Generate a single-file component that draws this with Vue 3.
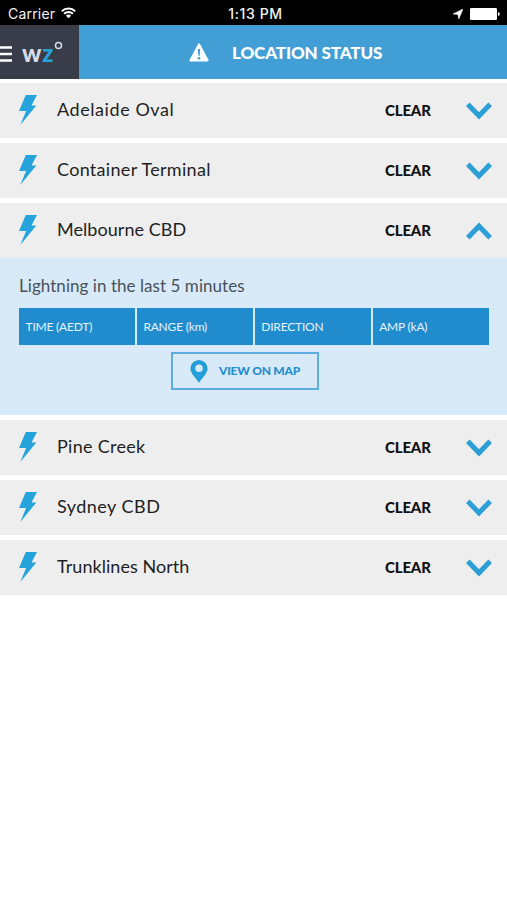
<script setup>
import { ref } from 'vue'

const locations = ref([
  { name: 'Adelaide Oval', spacing: 0.57, open: false },
  { name: 'Container Terminal', spacing: 0.3, open: false },
  { name: 'Melbourne CBD', spacing: 0.05, open: true },
  { name: 'Pine Creek', spacing: 0.3, open: false },
  { name: 'Sydney CBD', spacing: 0.48, open: false },
  { name: 'Trunklines North', spacing: 0.05, open: false }
])
const columns = ['TIME (AEDT)', 'RANGE (km)', 'DIRECTION', 'AMP (kA)']
</script>

<template>
  <div class="screen">
    <div class="status-bar">
      <div class="carrier">
        <span>Carrier</span>
        <svg width="15" height="12" viewBox="0 0 15 12" fill="none" stroke="#fff" stroke-width="1.9">
          <path d="M.8 4.2a9.8 9.8 0 0 1 13.4 0M3.1 6.8a6.3 6.3 0 0 1 8.8 0" />
          <path d="M7.5 11.3L4.9 8.7a3.8 3.8 0 0 1 5.2 0z" fill="#fff" stroke="none" />
        </svg>
      </div>
      <div class="clock">1:13 PM</div>
      <div class="indicators">
        <svg width="10" height="10" viewBox="0 0 10 10"><path d="M0 5L10 0L5.8 10L4.9 5.4z" fill="#fff" stroke="#fff" stroke-width=".5" /></svg>
        <svg width="30" height="12" viewBox="0 0 30 12" fill="#fff"><rect width="27" height="12" rx="1.3" /><path d="M28 4q1.8.5 1.8 2T28 8z" /></svg>
      </div>
    </div>
    <header class="header">
      <div class="brand">
        <svg class="menu" width="12" height="16" viewBox="0 0 12 16"><path d="M0 1.5h12M0 8h12M0 14.5h12" stroke="#fff" stroke-width="2.6" /></svg>
        <span class="logo">w<b>z</b></span>
        <svg class="degree" width="9" height="9" viewBox="0 0 9 9"><circle cx="4.5" cy="4.5" r="3" fill="none" stroke="#d8dce9" stroke-width="1.5" /></svg>
      </div>
      <div class="heading">
        <svg width="20" height="19" viewBox="0 0 20 19">
          <path d="M9 .9q1-1.5 2 0l8.5 16q.6 1.5-1 1.5h-17q-1.6 0-1-1.5z" fill="#fff" />
          <path d="M8.8 6h2.4l-.5 6.7H9.3z" fill="#419fd5" /><circle cx="10" cy="15.2" r="1.3" fill="#419fd5" />
        </svg>
        <h1>LOCATION STATUS</h1>
      </div>
    </header>
    <main class="list">
      <section v-for="item in locations" :key="item.name">
        <div class="row" @click="item.open = !item.open">
          <svg class="bolt" width="18" height="30" viewBox="0 0 18 30"><path d="M6.800 0H18L12.500 10.600H17.300L1.300 30L7.100 15.900H0z" fill="#25a3da" /></svg>
          <span class="name" :style="{ letterSpacing: item.spacing + 'px' }">{{ item.name }}</span>
          <span class="state">CLEAR</span>
          <svg class="chevron" :class="{ up: item.open }" width="26" height="18" viewBox="0 0 26 18"><path d="M1.800 2.200L13 13.800L24.200 2.200" fill="none" stroke="#2b9fd6" stroke-width="5" /></svg>
        </div>
        <div v-if="item.open" class="panel">
          <h2>Lightning in the last 5 minutes</h2>
          <div class="table"><div v-for="column in columns" :key="column">{{ column }}</div></div>
          <button>
            <svg width="18" height="23" viewBox="0 0 18 23"><path fill-rule="evenodd" d="M9 0a8.600 8.600 0 0 1 8.600 8.600C17.600 13.500 12 18 9 23C6 18 .4 13.500.4 8.600A8.600 8.600 0 0 1 9 0zM9 4.500a3.800 3.800 0 1 0 0 7.600a3.800 3.800 0 0 0 0-7.600z" fill="#249ed8" /></svg>
            <span>VIEW ON MAP</span>
          </button>
        </div>
      </section>
    </main>
  </div>
</template>

<style>
body { margin: 0; background: #fff; }
</style>

<style scoped>
.screen { width: 100%; min-height: 900px; background: #fff; font-family: Lato, "Liberation Sans", sans-serif; overflow: hidden; }
.status-bar { height: 25px; background: #000; color: #f2f2f2; display: grid; grid-template-columns: 1fr auto 1fr; align-items: center; box-sizing: border-box; padding: 3px 7px 0 8px; font: 14px/20px Inter, sans-serif; }
.carrier { display: flex; align-items: center; gap: 6px; letter-spacing: .2px; }
.carrier svg { margin-top: -3px; }
.clock { font-weight: 500; font-size: 14px; letter-spacing: .6px; padding-left: 3px; }
.indicators { display: flex; align-items: center; justify-content: flex-end; gap: 7px; }
.header { height: 54px; display: flex; background: #419fd5; }
.brand { width: 79px; background: #383d49; display: flex; align-items: center; box-sizing: border-box; padding-top: 4px; }
.logo { margin-left: 10px; font: 900 24px/28px Lato, sans-serif; color: #d8dce9; margin-top: -3px; letter-spacing: .7px; }
.logo b { color: #25a3da; font-weight: 900; }
.degree { margin: -18px 0 0 0; }
.heading { flex: 1; display: flex; align-items: center; padding-left: 110px; gap: 23px; }
h1 { margin: 1px 0 0; font-size: 17px; line-height: 24px; font-weight: 900; letter-spacing: -.12px; color: #fff; white-space: nowrap; }
.list { display: flex; flex-direction: column; gap: 5px; padding-top: 4px; }
.row { height: 55px; background: #eee; display: flex; align-items: center; box-sizing: border-box; padding: 0 15px 2px 19px; }
.bolt { margin-right: 20px; }
.name { flex: 1; font-size: 18px; line-height: 26px; margin-top: -1px; color: #1f1f1f; }
.state { width: 81px; font-size: 15px; line-height: 22px; font-weight: 900; letter-spacing: -.15px; color: #111; }
.chevron { margin-top: 2px; }
.chevron.up { transform: rotate(180deg); }
.panel { height: 157px; background: #d8e9f8; box-sizing: border-box; padding: 16px 18px 0 19px; }
h2 { margin: 0; font-size: 17px; font-weight: 400; line-height: 24px; letter-spacing: .05px; color: #47525d; }
.table { display: grid; grid-template-columns: repeat(4, 1fr); gap: 1.5px; height: 37px; margin-top: 10px; }
.table div { background: #208ccd; color: #e4f3ff; font-size: 12px; line-height: 37px; padding-left: 6.5px; letter-spacing: -.2px; }
button { display: flex; align-items: center; gap: 11px; width: 148px; height: 38px; margin: 7px 0 0 152px; padding: 0 0 0 17px; box-sizing: border-box; border: 2px solid #5aaee0; background: transparent; color: #258fce; font: 900 12px/20px Lato, sans-serif; letter-spacing: -.25px; white-space: nowrap; }
</style>
